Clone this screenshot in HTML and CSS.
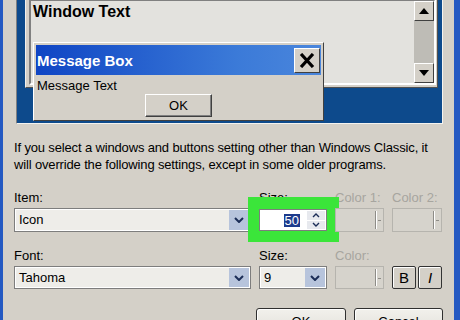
FILE: index.html
```html
<!DOCTYPE html>
<html>

<head>
    <title>Appearance</title>
    <link rel="stylesheet" href="styles.css">
</head>

<body>
    <div class="screen">
        <div class="preview">
            <div class="window">
                <div class="client">
                    <div class="window-text">Window Text</div>
                    <div class="scrollbar">
                        <div class="sb-btn">
                            <svg width="10" height="6" viewBox="0 0 10 6"><path d="M0 6 L5 0 L10 6 Z" fill="#000" /></svg>
                        </div>
                        <div class="sb-track"></div>
                        <div class="sb-btn">
                            <svg width="10" height="6" viewBox="0 0 10 6"><path d="M0 0 L5 6 L10 0 Z" fill="#000" /></svg>
                        </div>
                    </div>
                </div>
            </div>
            <div class="msgbox">
                <div class="msg-title">
                    <span>Message Box</span>
                    <span class="close">
                        <svg width="16" height="15" viewBox="0 0 16 15"><path d="M2 1 L14 14 M14 1 L2 14" stroke="#000" stroke-width="3.2" /></svg>
                    </span>
                </div>
                <div class="msg-text">Message Text</div>
                <div class="msg-ok">OK</div>
            </div>
        </div>

        <p class="note">If you select a windows and buttons setting other than Windows Classic, it will override the following settings, except in some older programs.</p>

        <div class="form">
            <div class="field">
                <label>Item:</label>
                <div class="select">
                    <span class="value">Icon</span>
                    <span class="arrow"><svg width="10" height="6" viewBox="0 0 10 6"><path d="M1 1 L5 5 L9 1" stroke="#1b2d57" stroke-width="2" fill="none" /></svg></span>
                </div>
            </div>
            <div class="field">
                <label>Size:</label>
                <div class="spin-wrap">
                    <div class="spin">
                        <span class="spin-value"><span class="sel">50</span></span>
                        <span class="spin-btns">
                            <span><svg width="8" height="5" viewBox="0 0 8 5"><path d="M1 4 L4 1 L7 4" stroke="#1b2d57" stroke-width="1.4" fill="none" /></svg></span>
                            <span><svg width="8" height="5" viewBox="0 0 8 5"><path d="M1 1 L4 4 L7 1" stroke="#1b2d57" stroke-width="1.4" fill="none" /></svg></span>
                        </span>
                    </div>
                </div>
            </div>
            <div class="field">
                <label class="off">Color 1:</label>
                <div class="color"><span class="split"></span><span class="dash"></span></div>
            </div>
            <div class="field">
                <label class="off">Color 2:</label>
                <div class="color"><span class="split"></span><span class="dash"></span></div>
            </div>

            <div class="field">
                <label>Font:</label>
                <div class="select short">
                    <span class="value">Tahoma</span>
                    <span class="arrow"><svg width="10" height="6" viewBox="0 0 10 6"><path d="M1 1 L5 5 L9 1" stroke="#1b2d57" stroke-width="2" fill="none" /></svg></span>
                </div>
            </div>
            <div class="field">
                <label>Size:</label>
                <div class="select short">
                    <span class="value">9</span>
                    <span class="arrow"><svg width="10" height="6" viewBox="0 0 10 6"><path d="M1 1 L5 5 L9 1" stroke="#1b2d57" stroke-width="2" fill="none" /></svg></span>
                </div>
            </div>
            <div class="field">
                <label class="off">Color:</label>
                <div class="color short"><span class="split"></span><span class="dash"></span></div>
            </div>
            <div class="field styles">
                <button class="style-btn bold">B</button>
                <button class="style-btn italic">I</button>
            </div>
        </div>

        <div class="actions">
            <button class="dlg-btn ok">OK</button>
            <button class="dlg-btn cancel">Cancel</button>
        </div>
    </div>
</body>

</html>
```

FILE: styles.css
```css
html {
    --face: #d4d0c8;
    --edge: #2459c2;
    --navy: #0d4a8c;
    --offText: #a7a59f;
}

body {
    margin: 0;
    font-family: "Liberation Sans", Arial, sans-serif;
    font-size: 13px;
    color: #000;
    background: var(--face);
}

.screen {
    box-sizing: border-box;
    width: 460px;
    height: 320px;
    overflow: hidden;
    padding: 0 11px 0 11px;
    border-left: 3px solid var(--edge);
    border-right: 6px solid var(--edge);
    background: var(--face);
}

/* preview desktop */
.preview {
    position: relative;
    box-sizing: border-box;
    width: 427px;
    height: 144px;
    margin: -20px 0 0 2px;
    border: 1px solid;
    border-color: #808080 #f4f3ef #f4f3ef #808080;
    background: var(--navy);
}

.window {
    position: absolute;
    left: 8px;
    top: 14px;
    box-sizing: border-box;
    width: 413px;
    height: 93px;
    padding: 3px 1px 2px 3px;
    border: 1px solid;
    border-color: #f2f1ec #505050 #505050 #f2f1ec;
    background: var(--face);
}

.client {
    display: flex;
    box-sizing: border-box;
    height: 100%;
    border: 2px solid;
    border-color: #808080 #fff #fff #808080;
    background: #e3e2de;
}

.window-text {
    flex: 1;
    padding: 1px 0 0 2px;
    font-size: 16px;
    font-weight: bold;
    line-height: 20px;
}

.scrollbar {
    display: flex;
    flex-direction: column;
    width: 20px;
}

.sb-btn {
    display: flex;
    align-items: center;
    justify-content: center;
    box-sizing: border-box;
    height: 20px;
    border: 1px solid;
    border-color: #fff #404040 #404040 #fff;
    background: var(--face);
}

.sb-track {
    flex: 1;
    background: #bebcb6;
}

.msgbox {
    position: absolute;
    left: 16px;
    top: 61px;
    box-sizing: border-box;
    width: 291px;
    height: 79px;
    padding: 2px;
    border: 1px solid;
    border-color: #fff #404040 #404040 #fff;
    background: var(--face);
}

.msg-title {
    display: flex;
    align-items: center;
    justify-content: space-between;
    height: 30px;
    padding-left: 1px;
    color: #fff;
    font-size: 15px;
    font-weight: bold;
    background: linear-gradient(to right, #0f45c4, #3b7ad8 70%, #4a86dc);
}

.close {
    display: flex;
    align-items: center;
    justify-content: center;
    box-sizing: border-box;
    width: 26px;
    height: 25px;
    margin-right: 1px;
    border: 1px solid;
    border-color: #fff #404040 #404040 #fff;
    background: var(--face);
}

.msg-text {
    padding: 3px 0 0 1px;
    line-height: 16px;
}

.msg-ok {
    box-sizing: border-box;
    width: 67px;
    height: 23px;
    margin: 0 auto;
    line-height: 21px;
    text-align: center;
    border: 1px solid;
    border-color: #fff #404040 #404040 #fff;
    box-shadow: inset -1px -1px 0 #808080;
}

/* text + form */
.note {
    margin: 15px 0 0 0;
    line-height: 17px;
    letter-spacing: -0.15px;
}

.form {
    display: grid;
    grid-template-columns: 237px 68px 49px 50px;
    column-gap: 8px;
    row-gap: 16px;
    margin-top: 17px;
}

.field {
    display: flex;
    flex-direction: column;
}

.field label {
    line-height: 16px;
    margin-bottom: 2px;
}

.field label.off {
    color: var(--offText);
}

.select {
    display: flex;
    box-sizing: border-box;
    height: 24px;
    padding: 1px;
    border: 1px solid #7d7d7d;
    box-shadow: inset 0 0 0 1px #fff;
    background: #eeede9;
}

.select.short {
    height: 23px;
}

.select .value {
    flex: 1;
    padding-left: 3px;
    line-height: 20px;
}

.select .arrow {
    display: flex;
    align-items: center;
    justify-content: center;
    width: 20px;
    background: #b7c4dc;
}

.spin-wrap {
    position: relative;
}

.spin-wrap::before {
    content: "";
    position: absolute;
    left: -11px;
    top: -11px;
    width: 91px;
    height: 45px;
    background: #3be53a;
}

.spin {
    position: relative;
    display: flex;
    box-sizing: border-box;
    height: 22px;
    margin-top: 1px;
    border: 1px solid #7d7d7d;
    background: #fff;
}

.spin-value {
    flex: 1;
    display: flex;
    align-items: center;
    justify-content: flex-end;
    padding-right: 6px;
}

.sel {
    padding: 0 1px;
    line-height: 13px;
    color: #fff;
    background: #1d3b8c;
}

.spin-btns {
    display: flex;
    flex-direction: column;
    width: 18px;
    padding: 1px;
    gap: 1px;
}

.spin-btns span {
    flex: 1;
    display: flex;
    align-items: center;
    justify-content: center;
    background: #e7e9ee;
}

.color {
    position: relative;
    box-sizing: border-box;
    height: 24px;
    border: 1px solid #b6b4ae;
    background: #d6d3cc;
}

.color.short {
    height: 23px;
}

.color .split {
    position: absolute;
    right: 7px;
    top: 2px;
    bottom: 2px;
    width: 1px;
    background: #8e8c87;
    box-shadow: 1px 0 0 #fff;
}

.color .dash {
    position: absolute;
    right: 2px;
    top: 50%;
    width: 3px;
    height: 1px;
    background: #8e8c87;
}

.field.styles {
    flex-direction: row;
    align-items: flex-end;
    gap: 2px;
}

.style-btn {
    box-sizing: border-box;
    width: 24px;
    height: 23px;
    padding: 0;
    font-family: "Liberation Sans", Arial, sans-serif;
    font-size: 15px;
    color: #000;
    border: 1px solid #333;
    border-radius: 2px;
    box-shadow: inset 1px 1px 0 #fff;
    background: var(--face);
}

.style-btn.italic {
    font-style: italic;
}

.actions {
    display: flex;
    justify-content: flex-end;
    gap: 8px;
    margin-top: 19px;
}

.dlg-btn {
    box-sizing: border-box;
    height: 26px;
    padding: 0;
    font-family: "Liberation Sans", Arial, sans-serif;
    font-size: 13px;
    color: #000;
    border: 1px solid #2f2f2f;
    border-radius: 3px;
    box-shadow: inset 1px 1px 0 #fff;
    background: linear-gradient(#f2f1ec, #e2e0da);
}

.dlg-btn.ok {
    width: 90px;
}

.dlg-btn.cancel {
    width: 89px;
}
```
